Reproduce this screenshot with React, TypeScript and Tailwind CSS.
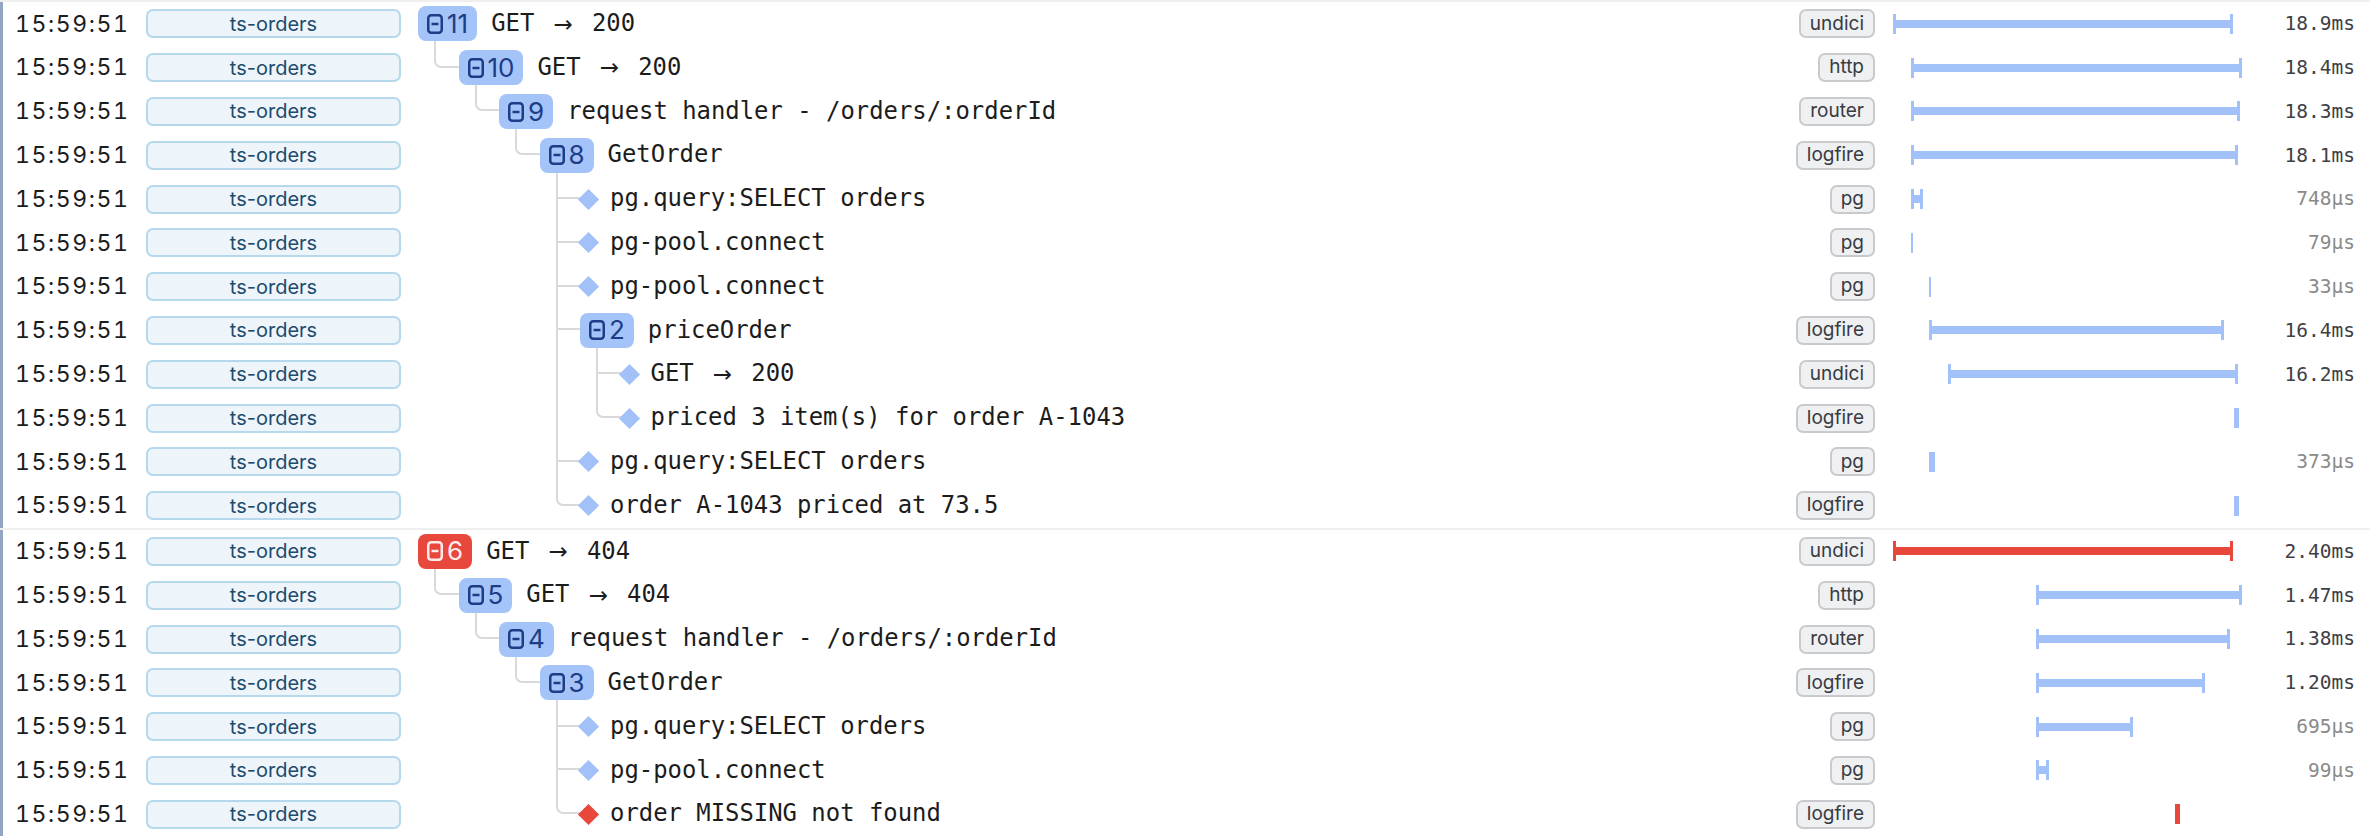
import clsx from "clsx";

interface Span {
  level: number;
  name: string;
  tag: string;
  count?: number;
  error?: boolean;
  start?: number;
  end?: number;
  at?: number;
  dur?: string;
}

// bar positions are pixel offsets inside the timeline column
const groups: Span[][] = [
  [
    { level: 0, count: 11, name: "GET → 200", tag: "undici", start: 18, end: 358, dur: "18.9ms" },
    { level: 1, count: 10, name: "GET → 200", tag: "http", start: 36, end: 367, dur: "18.4ms" },
    { level: 2, count: 9, name: "request handler - /orders/:orderId", tag: "router", start: 36, end: 365, dur: "18.3ms" },
    { level: 3, count: 8, name: "GetOrder", tag: "logfire", start: 36, end: 363, dur: "18.1ms" },
    { level: 4, name: "pg.query:SELECT orders", tag: "pg", start: 36, end: 48, dur: "748µs" },
    { level: 4, name: "pg-pool.connect", tag: "pg", start: 36, end: 38, dur: "79µs" },
    { level: 4, name: "pg-pool.connect", tag: "pg", start: 54, end: 56, dur: "33µs" },
    { level: 4, count: 2, name: "priceOrder", tag: "logfire", start: 54, end: 349, dur: "16.4ms" },
    { level: 5, name: "GET → 200", tag: "undici", start: 73, end: 363, dur: "16.2ms" },
    { level: 5, name: "priced 3 item(s) for order A-1043", tag: "logfire", at: 359 },
    { level: 4, name: "pg.query:SELECT orders", tag: "pg", start: 54, end: 60, dur: "373µs" },
    { level: 4, name: "order A-1043 priced at 73.5", tag: "logfire", at: 359 },
  ],
  [
    { level: 0, count: 6, error: true, name: "GET → 404", tag: "undici", start: 18, end: 358, dur: "2.40ms" },
    { level: 1, count: 5, name: "GET → 404", tag: "http", start: 161, end: 367, dur: "1.47ms" },
    { level: 2, count: 4, name: "request handler - /orders/:orderId", tag: "router", start: 161, end: 355, dur: "1.38ms" },
    { level: 3, count: 3, name: "GetOrder", tag: "logfire", start: 161, end: 330, dur: "1.20ms" },
    { level: 4, name: "pg.query:SELECT orders", tag: "pg", start: 161, end: 258, dur: "695µs" },
    { level: 4, name: "pg-pool.connect", tag: "pg", start: 161, end: 174, dur: "99µs" },
    { level: 4, error: true, name: "order MISSING not found", tag: "logfire", at: 300 },
  ],
];

const continues = (rows: Span[], i: number, lvl: number) => {
  for (let k = i + 1; k < rows.length; k++) {
    if (rows[k].level < lvl) return false;
    if (rows[k].level === lvl) return true;
  }
  return false;
};

const LINE = "border-[#d9d9dc]";

const MinusBox = ({ color }: { color: string }) => (
  <svg width="16" height="20" viewBox="0 0 16 20" fill="none">
    <rect x="1.25" y="1.25" width="13.5" height="17.5" rx="3" stroke={color} strokeWidth="2.5" />
    <line x1="4.5" y1="10" x2="11.5" y2="10" stroke={color} strokeWidth="2.5" />
  </svg>
);

// the arrow takes two cells in the reference font
const SpanName = ({ text }: { text: string }) => {
  const parts = text.split(" → ");
  if (parts.length === 1) return <>{text}</>;
  return (
    <>
      {parts[0]}
      <span className="inline-block w-[57.6px] text-center font-['DejaVu_Sans',sans-serif] text-[23px]">→</span>
      {parts[1]}
    </>
  );
};

const Bar = ({ span }: { span: Span }) => {
  const color = span.error ? "bg-[#e8473b]" : "bg-[#a2c1f8]";
  if (span.at !== undefined) {
    return <div className={clsx("h-[20px] w-[5px]", color)} style={{ marginLeft: span.at }} />;
  }
  const width = (span.end ?? 0) - (span.start ?? 0);
  if (width <= 6) {
    return <div className={clsx("h-[20px]", color)} style={{ marginLeft: span.start, width }} />;
  }
  return (
    <div className="flex h-[20px] items-center" style={{ marginLeft: span.start, width }}>
      <div className={clsx("h-full w-[3px]", color)} />
      <div className={clsx("h-[8px] flex-1", color)} />
      <div className={clsx("h-full w-[3px]", color)} />
    </div>
  );
};

const TreeRow = ({ rows, i }: { rows: Span[]; i: number }) => {
  const span = rows[i];
  const L = span.level;
  const hasChildren = i + 1 < rows.length && rows[i + 1].level === L + 1;
  const slots = Array.from({ length: L }, (_, j) => j);

  return (
    <div className="flex h-full min-w-0 flex-1 items-stretch pl-[17px]">
      {slots.map((j) =>
        j < L - 1 ? (
          <div key={j} className="h-full w-[40.5px] shrink-0">
            {continues(rows, i, j + 1) && <div className={clsx("ml-[16px] h-full border-l-2", LINE)} />}
          </div>
        ) : (
          <div key={j} className="flex h-full w-[40.5px] shrink-0 flex-col">
            <div
              className={clsx(
                "ml-[16px] h-1/2 border-b-2 border-l-2",
                LINE,
                !continues(rows, i, L) && "rounded-bl-[7px]"
              )}
            />
            <div className={clsx("ml-[16px] h-1/2", continues(rows, i, L) && "border-l-2", LINE)} />
          </div>
        )
      )}

      {span.count !== undefined ? (
        <div className="flex h-full shrink-0 flex-col">
          <div className="flex-1" />
          <div
            className={clsx(
              "flex h-[35px] items-center gap-[4px] rounded-[8px] px-[9px] font-['Inter',sans-serif] text-[26px] leading-none",
              span.error ? "bg-[#e8473b] text-[#fdeceb]" : "bg-[#a4c3f9] text-[#1d3d86]"
            )}
          >
            <MinusBox color={span.error ? "#fdeceb" : "#1d3d86"} />
            <span>{span.count}</span>
          </div>
          <div className="flex-1">
            {hasChildren && <div className={clsx("ml-[16px] h-full border-l-2", LINE)} />}
          </div>
        </div>
      ) : (
        <div className="-ml-[2px] flex h-full w-[21px] shrink-0 items-center justify-center">
          <div className={clsx("h-[15px] w-[15px] rotate-45", span.error ? "bg-[#e8473b]" : "bg-[#a2c1f8]")} />
        </div>
      )}

      <div
        className={clsx(
          "flex items-center whitespace-pre font-['DejaVu_Sans_Mono',monospace] text-[23.9px] text-[#1c1c1c]",
          span.count !== undefined ? "ml-[14px]" : "ml-[11px]"
        )}
      >
        <SpanName text={span.name} />
      </div>
    </div>
  );
};

export default function App() {
  return (
    <div className="w-[2370px] bg-white">
      {groups.map((rows, g) => (
        <div key={g} className="border-t-2 border-[#efefef]">
          <div className="border-l-[3px] border-[#93a4c3]">
            {rows.map((span, i) => (
              <div key={i} className="flex h-[43.8px] items-center pl-[12px] pr-[15px]">
                <div className="w-[131px] shrink-0 font-['Inter',sans-serif] text-[23px] tabular-nums tracking-[1.6px] text-[#1c1c1c]">
                  15:59:51
                </div>
                <div className="flex h-[29px] w-[255px] shrink-0 items-center justify-center rounded-[7px] border-2 border-[#b5d8ec] bg-[#edf5fa] font-['Inter',sans-serif] text-[20px] text-[#1d4b6e]">
                  ts-orders
                </div>
                <TreeRow rows={rows} i={i} />
                <div className="flex h-[29px] shrink-0 items-center rounded-[7px] border-2 border-[#c9cacd] bg-[#eff0f2] px-[9px] font-['Inter',sans-serif] text-[19px] text-[#373b42]">
                  {span.tag}
                </div>
                <div className="flex h-full w-[370px] shrink-0 items-center">
                  <Bar span={span} />
                </div>
                <div
                  className={clsx(
                    "w-[110px] shrink-0 text-right font-['DejaVu_Sans_Mono',monospace] text-[19.5px]",
                    span.dur?.endsWith("ms") ? "text-[#3f3f46]" : "text-[#8a8a8a]"
                  )}
                >
                  {span.dur}
                </div>
              </div>
            ))}
          </div>
        </div>
      ))}
    </div>
  );
}
